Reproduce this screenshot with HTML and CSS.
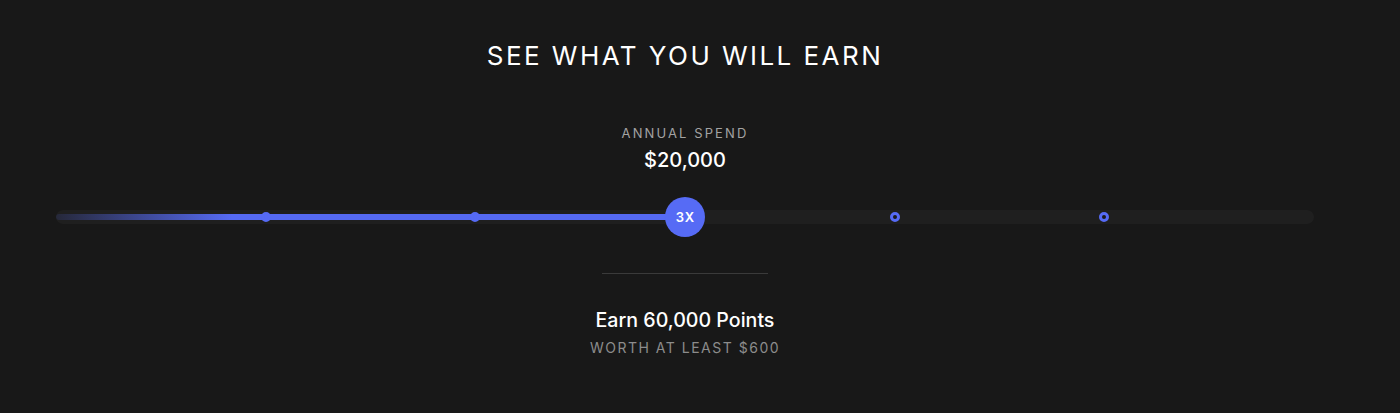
FILE: index.html
```html
<!DOCTYPE html>
<html lang="en">
<head>
    <meta charset="UTF-8">
    <meta name="viewport" content="width=device-width, initial-scale=1.0">
    <title>See What You Will Earn</title>
    <link rel="stylesheet" href="styles.css">
</head>
<body>
    <div id="calculator">
        <h1>See what you will earn</h1>
        <div class="spend">
            <p class="label">Annual Spend</p>
            <p class="amount">$20,000</p>
        </div>
        <div id="slider">
            <div class="track">
                <div class="fill" style="width: 50%"></div>
                <span class="dot done" style="left: 16.667%"></span>
                <span class="dot done" style="left: 33.333%"></span>
                <span class="dot" style="left: 66.667%"></span>
                <span class="dot" style="left: 83.333%"></span>
                <span class="knob" style="left: 50%">3X</span>
            </div>
        </div>
        <div class="divider"></div>
        <div class="result">
            <p class="points">Earn 60,000 Points</p>
            <p class="worth">Worth at least $600</p>
        </div>
    </div>
</body>
</html>
```

FILE: styles.css
```css
body {
    margin: 0;
    background-color: #181818;
    color: #ffffff;
    font-family: 'Inter', 'Liberation Sans', sans-serif;
}
p {
    margin: 0;
}
#calculator {
    width: 1370px;
    padding-top: 40px;
    text-align: center;
}
h1 {
    margin: 0;
    font-size: 26px;
    line-height: 32px;
    font-weight: 400;
    letter-spacing: 2.45px;
    text-transform: uppercase;
}
.spend {
    margin-top: 53px;
}
.label {
    font-size: 13px;
    line-height: 16px;
    letter-spacing: 2.1px;
    color: #a3a3a3;
    text-transform: uppercase;
}
.amount {
    margin-top: 7px;
    font-size: 20px;
    line-height: 24px;
    font-weight: 500;
}
#slider {
    margin: 25px 56px 0;
    height: 40px;
    display: flex;
    align-items: center;
}
.track {
    position: relative;
    width: 100%;
    height: 14px;
    border-radius: 7px;
    background-color: #1f1f1f;
}
.fill {
    position: absolute;
    left: 0;
    top: 4px;
    height: 6px;
    border-radius: 3px;
    background: linear-gradient(90deg, rgba(86, 107, 245, 0.12), #566bf5 28%);
}
.dot {
    position: absolute;
    top: 2px;
    width: 10px;
    height: 10px;
    margin-left: -5px;
    box-sizing: border-box;
    border-radius: 50%;
    border: 3px solid #566bf5;
    background-color: #1a1a1a;
}
.dot.done {
    background-color: #566bf5;
}
.knob {
    position: absolute;
    top: -13px;
    width: 40px;
    height: 40px;
    margin-left: -20px;
    border-radius: 50%;
    background-color: #566bf5;
    font-size: 13px;
    font-weight: 600;
    letter-spacing: 1px;
    line-height: 40px;
    text-indent: 1px;
}
.divider {
    width: 166px;
    height: 1px;
    margin: 36px auto 0;
    background-color: #3a3a3a;
}
.result {
    margin-top: 34px;
}
.points {
    font-size: 19.6px;
    line-height: 24px;
    font-weight: 500;
}
.worth {
    margin-top: 7px;
    font-size: 14px;
    line-height: 18px;
    letter-spacing: 1.5px;
    color: #8c8c8c;
    text-transform: uppercase;
}
```
